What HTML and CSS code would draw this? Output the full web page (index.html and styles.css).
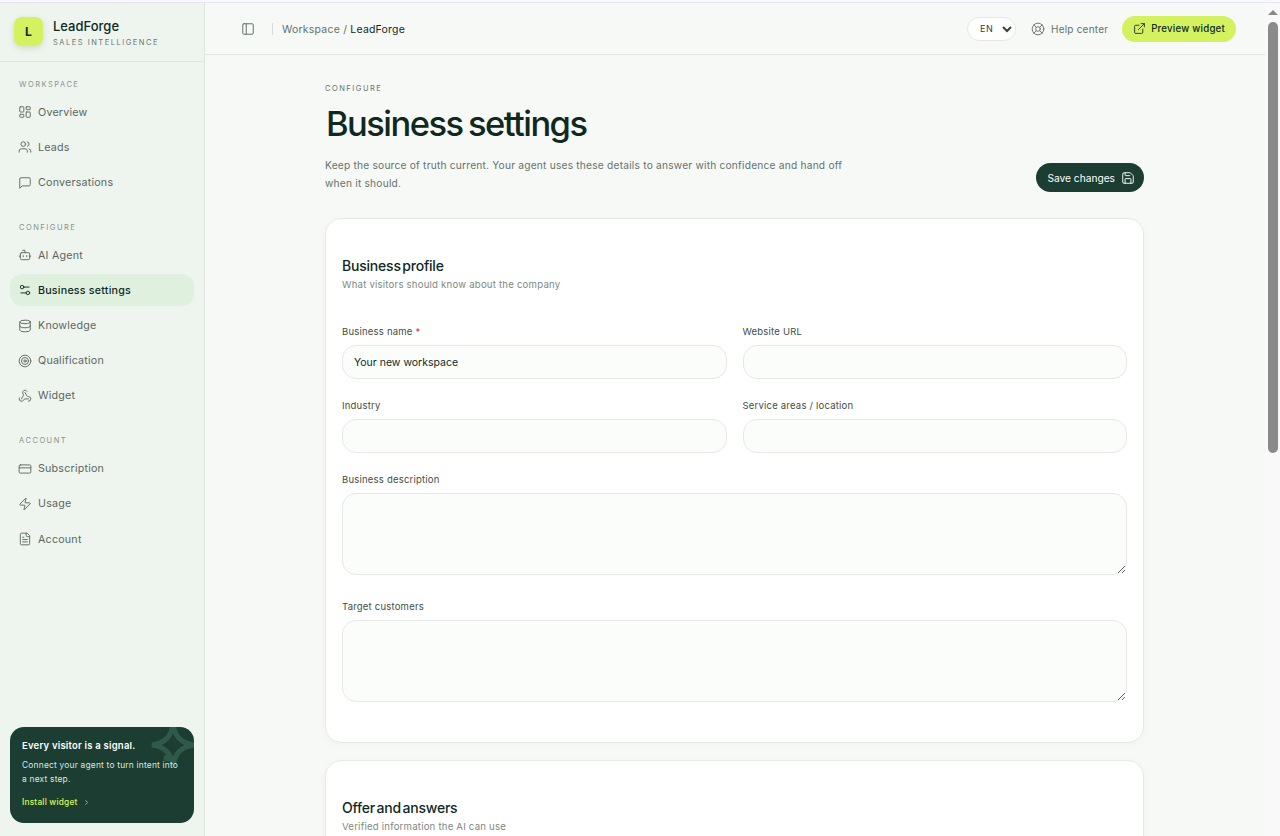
FILE: index.html
```html
<!DOCTYPE html>
<html lang="en">
<head>
<meta charset="utf-8">
<title>LeadForge – Business settings</title>
<link rel="stylesheet" href="styles.css">
</head>
<body>
<div class="topline"></div>
<div class="app">
  <aside class="sidebar">
    <div class="brand">
      <div class="logo">L</div>
      <div class="brand-text">
        <div class="brand-name">LeadForge</div>
        <div class="brand-sub">SALES INTELLIGENCE</div>
      </div>
    </div>
    <nav class="nav">
      <div class="nav-label">WORKSPACE</div>
      <a class="nav-item"><svg class="ic" viewBox="0 0 24 24"><rect x="3" y="3" width="7" height="9" rx="1"/><rect x="14" y="3" width="7" height="5" rx="1"/><rect x="14" y="12" width="7" height="9" rx="1"/><rect x="3" y="16" width="7" height="5" rx="1"/></svg>Overview</a>
      <a class="nav-item"><svg class="ic" viewBox="0 0 24 24"><path d="M16 21v-2a4 4 0 0 0-4-4H6a4 4 0 0 0-4 4v2"/><circle cx="9" cy="7" r="4"/><path d="M22 21v-2a4 4 0 0 0-3-3.87"/><path d="M16 3.13a4 4 0 0 1 0 7.75"/></svg>Leads</a>
      <a class="nav-item"><svg class="ic" viewBox="0 0 24 24"><path d="M21 15a2 2 0 0 1-2 2H7l-4 4V5a2 2 0 0 1 2-2h14a2 2 0 0 1 2 2z"/></svg>Conversations</a>
      <div class="nav-label">CONFIGURE</div>
      <a class="nav-item"><svg class="ic" viewBox="0 0 24 24"><path d="M12 8V4H8"/><rect x="4" y="8" width="16" height="12" rx="2"/><path d="M2 14h2M20 14h2M15 13v2M9 13v2"/></svg>AI Agent</a>
      <a class="nav-item active"><svg class="ic" viewBox="0 0 24 24"><path d="M14 17H5M19 7h-9"/><circle cx="17" cy="17" r="3"/><circle cx="7" cy="7" r="3"/></svg>Business settings</a>
      <a class="nav-item"><svg class="ic" viewBox="0 0 24 24"><ellipse cx="12" cy="5" rx="9" ry="3"/><path d="M3 5v14a9 3 0 0 0 18 0V5"/><path d="M3 12a9 3 0 0 0 18 0"/></svg>Knowledge</a>
      <a class="nav-item"><svg class="ic" viewBox="0 0 24 24"><circle cx="12" cy="12" r="10"/><circle cx="12" cy="12" r="6"/><circle cx="12" cy="12" r="2"/></svg>Qualification</a>
      <a class="nav-item"><svg class="ic" viewBox="0 0 24 24"><path d="M18 16.98h-5.99c-1.1 0-1.95.94-2.48 1.9A4 4 0 0 1 2 17c.01-.7.2-1.4.57-2"/><path d="m6 17 3.13-5.78c.53-.97.1-2.18-.5-3.1a4 4 0 1 1 6.89-4.06"/><path d="m12 6 3.13 5.73C15.66 12.7 16.9 13 18 13a4 4 0 0 1 0 8"/></svg>Widget</a>
      <div class="nav-label">ACCOUNT</div>
      <a class="nav-item"><svg class="ic" viewBox="0 0 24 24"><rect x="2" y="5" width="20" height="14" rx="2"/><path d="M2 10h20"/></svg>Subscription</a>
      <a class="nav-item"><svg class="ic" viewBox="0 0 24 24"><path d="M4 14a1 1 0 0 1-.78-1.63l9.9-10.2a.5.5 0 0 1 .86.46l-1.92 6.02A1 1 0 0 0 13 10h7a1 1 0 0 1 .78 1.63l-9.9 10.2a.5.5 0 0 1-.86-.46l1.92-6.02A1 1 0 0 0 11 14z"/></svg>Usage</a>
      <a class="nav-item"><svg class="ic" viewBox="0 0 24 24"><path d="M15 2H6a2 2 0 0 0-2 2v16a2 2 0 0 0 2 2h12a2 2 0 0 0 2-2V7z"/><path d="M14 2v4a2 2 0 0 0 2 2h4"/><path d="M8 13h8M8 17h8M8 9h2"/></svg>Account</a>
    </nav>
    <div class="promo">
      <svg class="promo-star" viewBox="0 0 48 48"><path d="M24 3c2 13 8 19 21 21-13 2-19 8-21 21-2-13-8-19-21-21 13-2 19-8 21-21z"/><circle class="dot" cx="18" cy="37" r="3.5"/><circle class="dot" cx="50" cy="12" r="3.5"/></svg>
      <div class="promo-title">Every visitor is a signal.</div>
      <div class="promo-text">Connect your agent to turn intent into a next step.</div>
      <a class="promo-link">Install widget <svg class="promo-chev" viewBox="0 0 24 24"><path d="m9 18 6-6-6-6"/></svg></a>
    </div>
  </aside>
  <div class="main">
    <header class="topbar">
      <svg class="ic top-toggle" viewBox="0 0 24 24"><rect x="3" y="3" width="18" height="18" rx="2"/><path d="M9 3v18"/></svg>
      <span class="divider"></span>
      <div class="crumbs">Workspace / <b>LeadForge</b></div>
      <div class="top-actions">
        <select class="lang"><option>EN</option></select>
        <a class="help"><svg class="ic" viewBox="0 0 24 24"><circle cx="12" cy="12" r="10"/><circle cx="12" cy="12" r="4"/><path d="m4.93 4.93 4.24 4.24M14.83 9.17l4.24-4.24M14.83 14.83l4.24 4.24M9.17 14.83l-4.24 4.24"/></svg>Help center</a>
        <a class="preview"><svg class="ic" viewBox="0 0 24 24"><path d="M15 3h6v6"/><path d="M10 14 21 3"/><path d="M18 13v6a2 2 0 0 1-2 2H5a2 2 0 0 1-2-2V8a2 2 0 0 1 2-2h6"/></svg>Preview widget</a>
      </div>
    </header>
    <main class="content">
      <div class="eyebrow">CONFIGURE</div>
      <h1>Business settings</h1>
      <div class="intro">
        <p>Keep the source of truth current. Your agent uses these details to answer with confidence and hand off when it should.</p>
        <button class="save">Save changes <svg class="ic" viewBox="0 0 24 24"><path d="M15.2 3a2 2 0 0 1 1.4.6l3.8 3.8a2 2 0 0 1 .6 1.4V19a2 2 0 0 1-2 2H5a2 2 0 0 1-2-2V5a2 2 0 0 1 2-2z"/><path d="M17 21v-7a1 1 0 0 0-1-1H8a1 1 0 0 0-1 1v7"/><path d="M7 3v4a1 1 0 0 0 1 1h7"/></svg></button>
      </div>
      <section class="card">
        <h2>Business profile</h2>
        <div class="sub">What visitors should know about the company</div>
        <div class="grid">
          <label class="field"><span>Business name <i>*</i></span><input value="Your new workspace"></label>
          <label class="field"><span>Website URL</span><input></label>
          <label class="field"><span>Industry</span><input></label>
          <label class="field"><span>Service areas / location</span><input></label>
          <label class="field wide"><span>Business description</span><textarea></textarea></label>
          <label class="field wide"><span>Target customers</span><textarea></textarea></label>
        </div>
      </section>
      <section class="card card-last">
        <h2>Offer and answers</h2>
        <div class="sub">Verified information the AI can use</div>
        <div class="grid">
          <label class="field wide"><span>Products and services</span><textarea></textarea></label>
          <label class="field wide"><span>Pricing notes</span><textarea></textarea></label>
          <label class="field wide"><span>Frequently asked questions</span><textarea></textarea></label>
        </div>
      </section>
    </main>
  </div>
  <div class="scrollbar" aria-hidden="true">
    <span class="scroll-arrow"></span>
    <span class="scroll-thumb"></span>
  </div>
</div>
</body>
</html>
```
FILE: styles.css
```css
* { box-sizing: border-box; }
html, body { margin: 0; height: 100%; overflow: hidden; }
body {
  font-family: Inter, "Liberation Sans", sans-serif;
  font-size: 10.5px;
  letter-spacing: 0.02em;
  color: #10291f;
  background: #f7f9f7;
  display: flex;
  flex-direction: column;
}
.topline { height: 3px; background: #f8f8fd; border-bottom: 1px solid #e4e6f3; flex: none; }
.app { flex: 1; display: flex; min-height: 0; }

.sidebar {
  width: 205px;
  flex: none;
  background: #eef5ef;
  border-right: 1px solid #dfe6e0;
  display: flex;
  flex-direction: column;
}
.brand {
  height: 59px;
  flex: none;
  border-bottom: 1px solid #dfe6e0;
  display: flex;
  align-items: center;
  gap: 10px;
  padding: 0 14px 1px;
}
.brand-text { margin-top: 4px; }
.logo {
  width: 29px;
  height: 29px;
  border-radius: 8px;
  background: #d4f25f;
  box-shadow: 0 2px 6px rgba(120, 150, 60, .25);
  display: flex;
  align-items: center;
  justify-content: center;
  font-weight: 700;
  font-size: 12px;
}
.brand-name { font-size: 13px; font-weight: 500; line-height: 17px; letter-spacing: 0; }
.brand-sub { font-size: 7.5px; letter-spacing: .2em; color: #69776f; line-height: 12px; margin-top: 2px; }

.nav { flex: 1; padding: 0 10px; display: flex; flex-direction: column; gap: 3.2px; }
.nav-label {
  font-size: 7.5px;
  letter-spacing: .2em;
  color: #87938c;
  padding: 0 9px;
  line-height: 10px;
  margin-top: 21.3px;
  margin-bottom: 3px;
}
.nav-label:first-child { margin-top: 18px; }
.nav-item {
  height: 32px;
  display: flex;
  align-items: center;
  gap: 6px;
  padding: 0 8px;
  border-radius: 12px;
  color: #5a6760;
  font-size: 10.7px;
}
.nav-item.active { background: #dff1de; color: #10291f; font-weight: 500; }
.ic {
  width: 14px;
  height: 14px;
  flex: none;
  fill: none;
  stroke: currentColor;
  stroke-width: 1.6;
  stroke-linecap: round;
  stroke-linejoin: round;
}

.promo {
  position: relative;
  overflow: hidden;
  margin: 0 10px 13px;
  height: 96px;
  flex: none;
  border-radius: 14px;
  background: #1c3d31;
  color: #fff;
  padding: 12px 12px 0;
}
.promo-star {
  position: absolute;
  right: -3px;
  top: -6px;
  width: 48px;
  height: 48px;
  overflow: visible;
  fill: none;
  stroke: #2f5a49;
  stroke-width: 5;
}
.promo-star .dot { fill: #2f5a49; stroke: none; }
.promo-title { font-size: 9.5px; font-weight: 600; line-height: 13px; position: relative; }
.promo-text { font-size: 8.4px; line-height: 14px; color: #dbe7e0; margin-top: 6px; position: relative; }
.promo-link { display: flex; align-items: center; gap: 4px; font-size: 8.3px; font-weight: 500; color: #d8f75a; margin-top: 11px; }
.promo-chev { width: 9px; height: 9px; fill: none; stroke: #a9c94c; stroke-width: 2.4; }

.main { flex: 1; min-width: 0; overflow-y: auto; }
.topbar {
  position: sticky;
  top: 0;
  z-index: 2;
  height: 52px;
  background: #f7f9f7;
  border-bottom: 1px solid #e1e6e2;
  display: flex;
  align-items: center;
  padding: 0 29px 0 36px;
}
.top-toggle { color: #5c6a63; }
.divider { width: 1px; height: 12px; background: #d6dcd8; margin: 0 9px 0 17px; }
.crumbs { color: #65726b; margin-top: 1px; }
.crumbs b { color: #10291f; font-weight: 400; }
.top-actions { margin-left: auto; display: flex; align-items: center; }
.lang {
  width: 49px;
  height: 24px;
  border: 1px solid #e5e9e6;
  border-radius: 12px;
  background: #fff;
  font: inherit;
  font-size: 9px;
  letter-spacing: .05em;
  color: #33423a;
  padding: 0 0 0 8px;
}
.help { display: flex; align-items: center; gap: 6px; color: #65726b; margin-left: 15px; font-size: 10px; }
.preview {
  display: flex;
  align-items: center;
  gap: 5px;
  height: 26px;
  padding: 0 11px;
  margin-left: 14px;
  border-radius: 13px;
  background: #d4f25f;
  font-size: 9.7px;
  font-weight: 500;
}
.preview .ic { width: 13px; height: 13px; }

.scrollbar {
  width: 15px;
  flex: none;
  background: #f8f9f8;
  display: flex;
  flex-direction: column;
  align-items: center;
  padding-top: 7px;
}
.scroll-arrow {
  width: 0;
  height: 0;
  border-left: 5px solid transparent;
  border-right: 5px solid transparent;
  border-bottom: 5px solid #8a8a8a;
}
.scroll-thumb {
  width: 10px;
  height: 431px;
  margin-top: 7px;
  border-radius: 5px;
  background: #8a8a8a;
}

.content { width: 819px; margin-left: 120px; padding-top: 29px; }
.eyebrow { font-size: 7.5px; letter-spacing: .2em; color: #65726b; line-height: 10px; }
h1 { margin: 9px 0 0 1px; font-size: 34.5px; font-weight: 500; line-height: 42px; letter-spacing: -.045em; word-spacing: -2px; color: #10291f; }
.intro { display: flex; justify-content: space-between; align-items: flex-end; margin-top: 11px; }
.intro p { margin: 0; width: 530px; line-height: 18px; color: #65726b; font-size: 10.2px; }
.save {
  height: 29px;
  padding: 0 9px 0 11px;
  border: 0;
  border-radius: 15px;
  background: #1c3d31;
  color: #fff;
  font: inherit;
  font-size: 10.2px;
  display: flex;
  align-items: center;
  gap: 6px;
}
.card {
  margin-top: 26px;
  background: #fff;
  border: 1px solid #e6e9e6;
  border-radius: 16px;
  padding: 38px 16px 40px;
  box-shadow: 0 2px 10px rgba(20, 50, 35, .03);
}
.card + .card { margin-top: 17px; }
.card-last { margin-bottom: 60px; }
h2 { margin: 0; font-size: 14px; font-weight: 500; line-height: 18px; letter-spacing: -.015em; word-spacing: -2px; }
.sub { font-size: 9.6px; color: #7c8882; line-height: 12px; margin-top: 4px; }
.grid { display: grid; grid-template-columns: 1fr 1fr; column-gap: 16px; row-gap: 21px; margin-top: 35px; }
.field { display: flex; flex-direction: column; gap: 7px; min-width: 0; }
.field span { font-size: 9.5px; line-height: 12px; color: #3f4d46; }
.field i { color: #d33; font-style: normal; }
.wide { grid-column: 1 / -1; }
input, textarea {
  width: 100%;
  border: 1px solid #e6e9e6;
  background: #fbfdfb;
  font: inherit;
  font-size: 10.5px;
  color: #10291f;
  outline: 0;
}
input { height: 34px; border-radius: 14px; padding: 0 11px; }
textarea { height: 82px; border-radius: 14px; padding: 8px 11px; display: block; resize: vertical; }
.wide + .wide { margin-top: 5px; }
```
